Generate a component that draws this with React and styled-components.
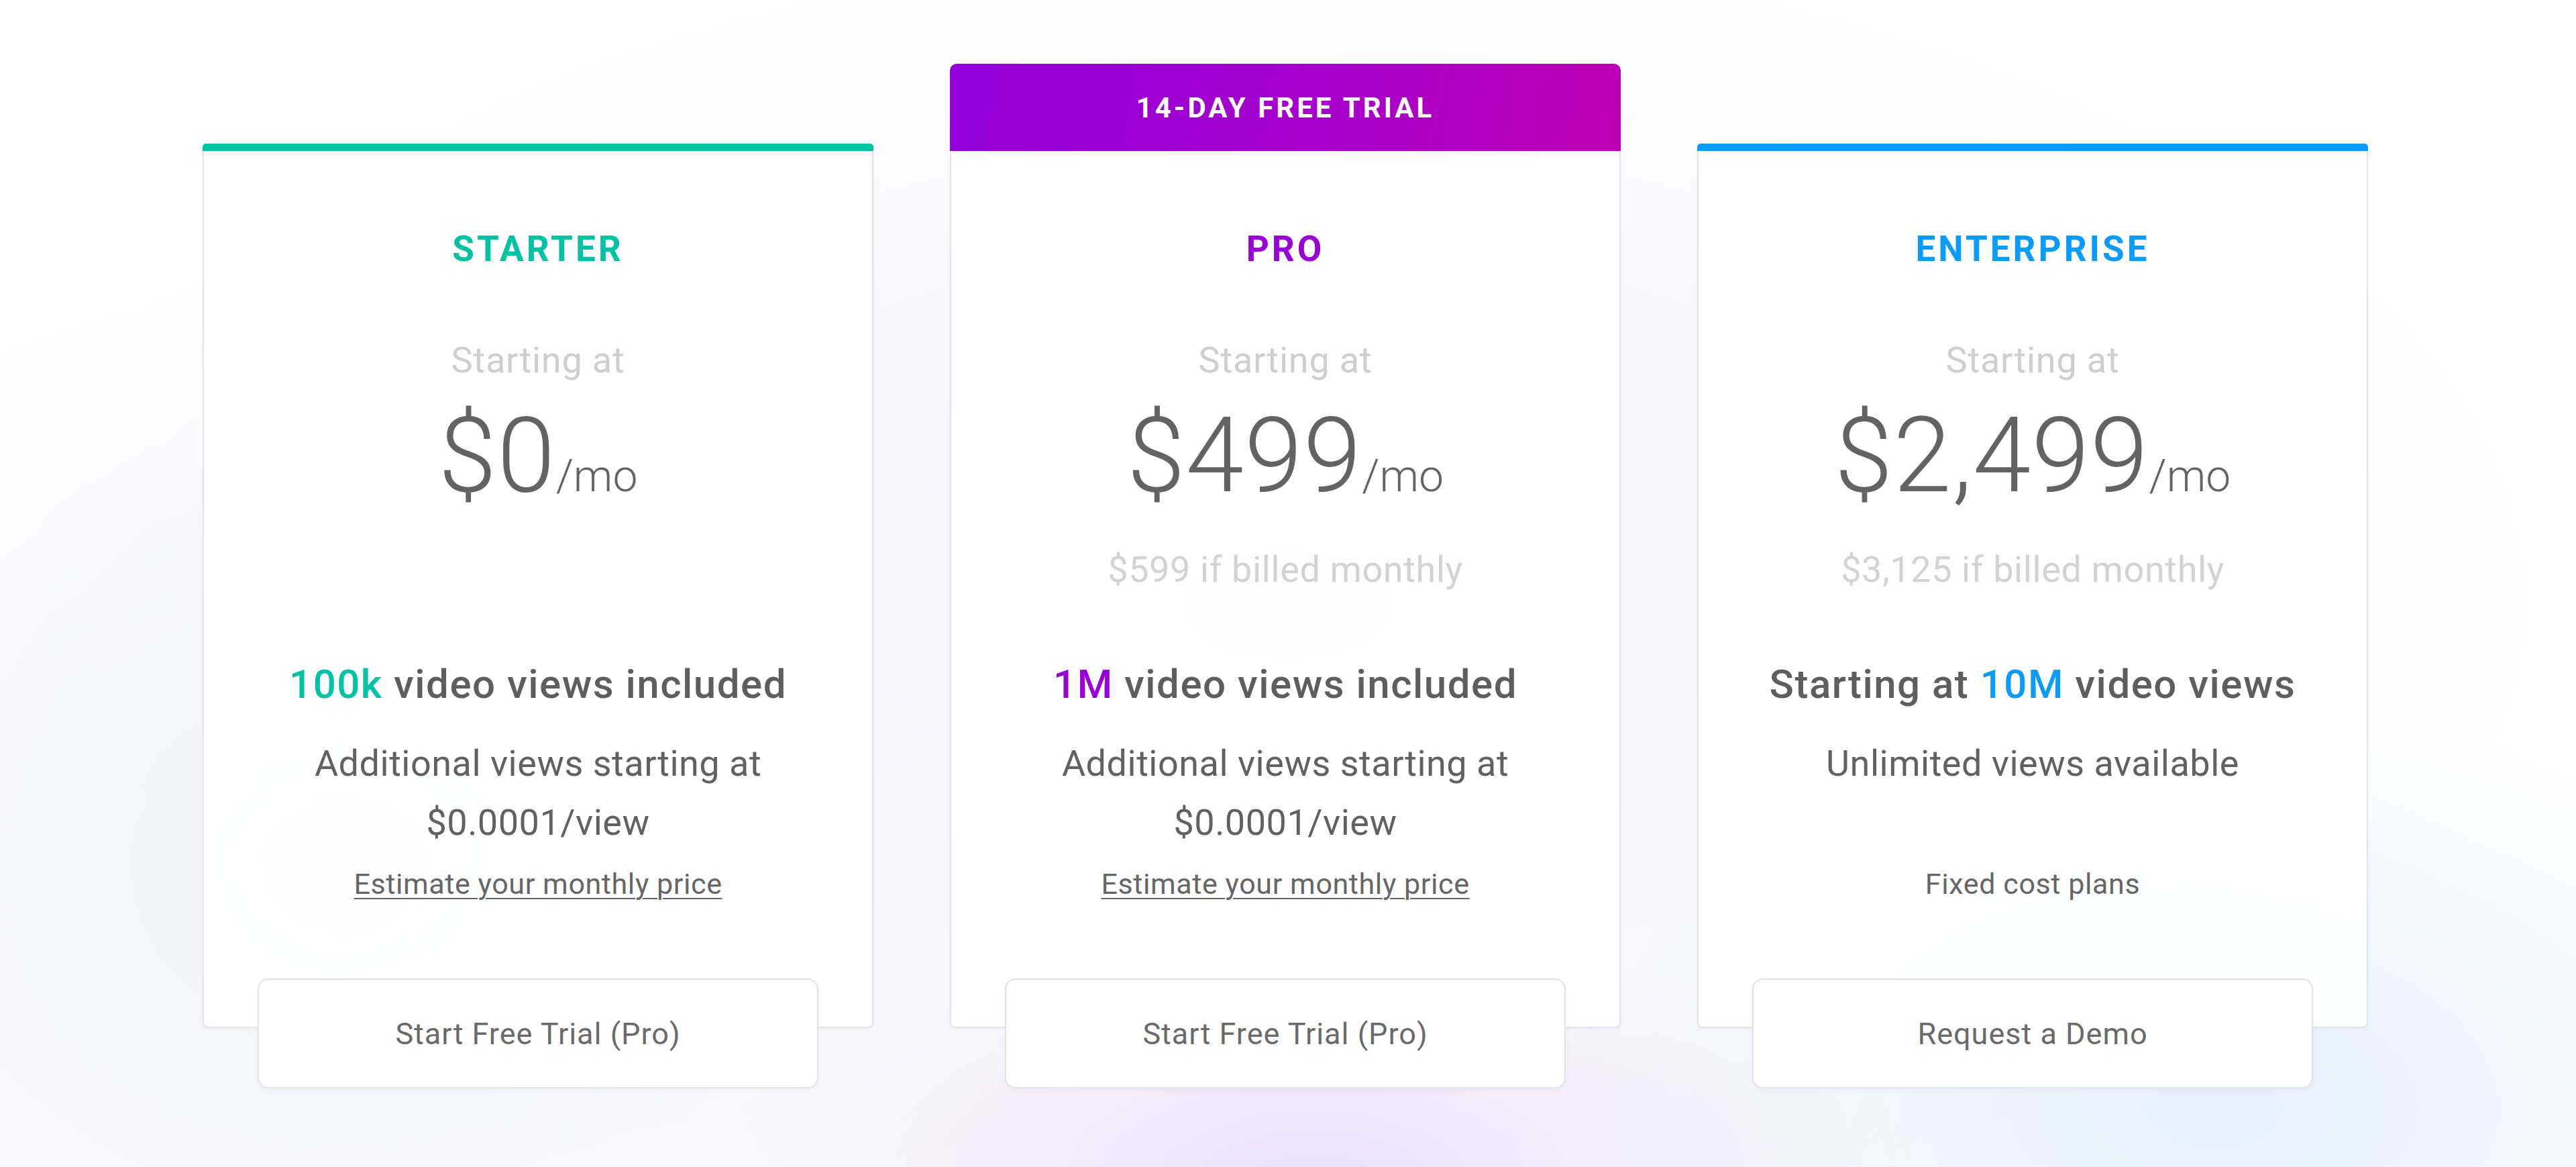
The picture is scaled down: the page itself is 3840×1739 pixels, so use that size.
import React from 'react';
import styled, { createGlobalStyle } from 'styled-components';

const GlobalStyle = createGlobalStyle`
    html, body {
        margin: 0;
        padding: 0;
    }
    body {
        font-family: Roboto, "Liberation Sans", Arial, sans-serif;
        color: #616161;
        background: #ffffff;
    }
`;

const Page = styled.div`
    height: 1739px;
    overflow: hidden;
    box-sizing: border-box;
    padding-top: 95px;
    background:
        radial-gradient(ellipse 900px 380px at 1960px 1760px, rgba(232, 220, 248, 0.9), rgba(232, 220, 248, 0) 100%),
        radial-gradient(ellipse 1000px 600px at 3300px 1650px, rgba(226, 238, 252, 0.9), rgba(226, 238, 252, 0) 100%),
        radial-gradient(ellipse 1100px 900px at 500px 1300px, rgba(238, 240, 246, 0.9), rgba(238, 240, 246, 0) 100%),
        radial-gradient(ellipse 1900px 1000px at 1920px 900px, rgba(240, 240, 250, 0.9), rgba(240, 240, 250, 0) 100%),
        #ffffff;
`;

const Columns = styled.div`
    display: flex;
    justify-content: center;
    align-items: flex-end;
    gap: 114px;
    padding-right: 8px;
`;

const Column = styled.div`
    width: 1000px;
    display: flex;
    flex-direction: column;
`;

const TopBar = styled.div`
    height: 11px;
    border-radius: 5px 5px 0 0;
    background: ${p => p.color};
`;

const Banner = styled.div`
    height: 130px;
    border-radius: 10px 10px 0 0;
    background: linear-gradient(100deg, #9200d9 0%, #a600cc 55%, #bd00b4 100%);
    color: #ffffff;
    font-weight: 700;
    font-size: 42px;
    letter-spacing: 4px;
    display: flex;
    align-items: center;
    justify-content: center;
`;

const Body = styled.div`
    background: rgba(255, 255, 255, 0.93);
    border: 2px solid #e4e4e6;
    border-top: none;
    border-radius: 0 0 8px 8px;
    display: flex;
    flex-direction: column;
    align-items: center;
    text-align: center;
    box-shadow: 0 2px 6px rgba(0, 0, 0, 0.03);
`;

const PlanName = styled.div`
    margin-top: 116px;
    font-size: 53px;
    line-height: 60px;
    font-weight: 700;
    letter-spacing: 4px;
    color: ${p => p.color};
`;

const StartingAt = styled.div`
    margin-top: 104px;
    font-size: 54px;
    line-height: 64px;
    color: #cfcfcf;
    letter-spacing: 0.8px;
`;

const Price = styled.div`
    margin-top: 30px;
    font-size: 156px;
    line-height: 160px;
    font-weight: 300;
    color: #636363;
    letter-spacing: 1px;
`;

const PerMonth = styled.span`
    font-size: 66px;
    font-weight: 300;
    letter-spacing: 0;
`;

const Billed = styled.div`
    margin-top: 27px;
    height: 64px;
    font-size: 54px;
    line-height: 64px;
    color: #d3d3d3;
    letter-spacing: 0.6px;
`;

const Views = styled.div`
    margin-top: 104px;
    font-size: 60px;
    line-height: 70px;
    font-weight: 500;
    letter-spacing: 1.5px;
    color: #5e5e5e;
`;

const Highlight = styled.span`
    color: ${p => p.color};
`;

const Details = styled.div`
    margin-top: 39px;
    min-height: 176px;
    font-size: 54px;
    line-height: 88px;
    color: #616161;
    letter-spacing: 0.5px;
`;

const SmallNote = styled.div`
    margin-top: 22px;
    font-size: 43px;
    line-height: 50px;
    color: #666666;
    letter-spacing: 0.6px;
    text-decoration: ${p => (p.link ? 'underline' : 'none')};
    text-underline-offset: 6px;
    text-decoration-thickness: 2px;
`;

const Button = styled.button`
    margin-top: 116px;
    margin-bottom: -92px;
    width: 836px;
    height: 164px;
    border: 2px solid #e3e3e5;
    border-radius: 16px;
    background: #ffffff;
    box-shadow: 0 3px 8px rgba(0, 0, 0, 0.03);
    font-family: inherit;
    font-size: 45px;
    letter-spacing: 1px;
    color: #6a6a6a;
    cursor: pointer;
`;

const plans = [
    {
        name: 'STARTER',
        color: '#00c2a5',
        price: '$0',
        billed: null,
        views: <><Highlight color="#00c2a5">100k</Highlight> video views included</>,
        details: <>Additional views starting at<br />$0.0001/view</>,
        note: 'Estimate your monthly price',
        link: true,
        cta: 'Start Free Trial (Pro)',
    },
    {
        name: 'PRO',
        color: '#9a00d8',
        banner: '14-DAY FREE TRIAL',
        price: '$499',
        billed: '$599 if billed monthly',
        views: <><Highlight color="#9a00d8">1M</Highlight> video views included</>,
        details: <>Additional views starting at<br />$0.0001/view</>,
        note: 'Estimate your monthly price',
        link: true,
        cta: 'Start Free Trial (Pro)',
    },
    {
        name: 'ENTERPRISE',
        color: '#0a9bfd',
        price: '$2,499',
        billed: '$3,125 if billed monthly',
        views: <>Starting at <Highlight color="#0a9bfd">10M</Highlight> video views</>,
        details: <>Unlimited views available</>,
        note: 'Fixed cost plans',
        link: false,
        cta: 'Request a Demo',
    },
];

export default function App() {
    return (
        <>
            <GlobalStyle />
            <Page>
                <Columns>
                    {plans.map(plan => (
                        <Column key={plan.name}>
                            {plan.banner ? <Banner>{plan.banner}</Banner> : <TopBar color={plan.color} />}
                            <Body>
                                <PlanName color={plan.color}>{plan.name}</PlanName>
                                <StartingAt>Starting at</StartingAt>
                                <Price>{plan.price}<PerMonth>/mo</PerMonth></Price>
                                <Billed>{plan.billed}</Billed>
                                <Views>{plan.views}</Views>
                                <Details>{plan.details}</Details>
                                <SmallNote link={plan.link}>{plan.note}</SmallNote>
                                <Button>{plan.cta}</Button>
                            </Body>
                        </Column>
                    ))}
                </Columns>
            </Page>
        </>
    );
}
